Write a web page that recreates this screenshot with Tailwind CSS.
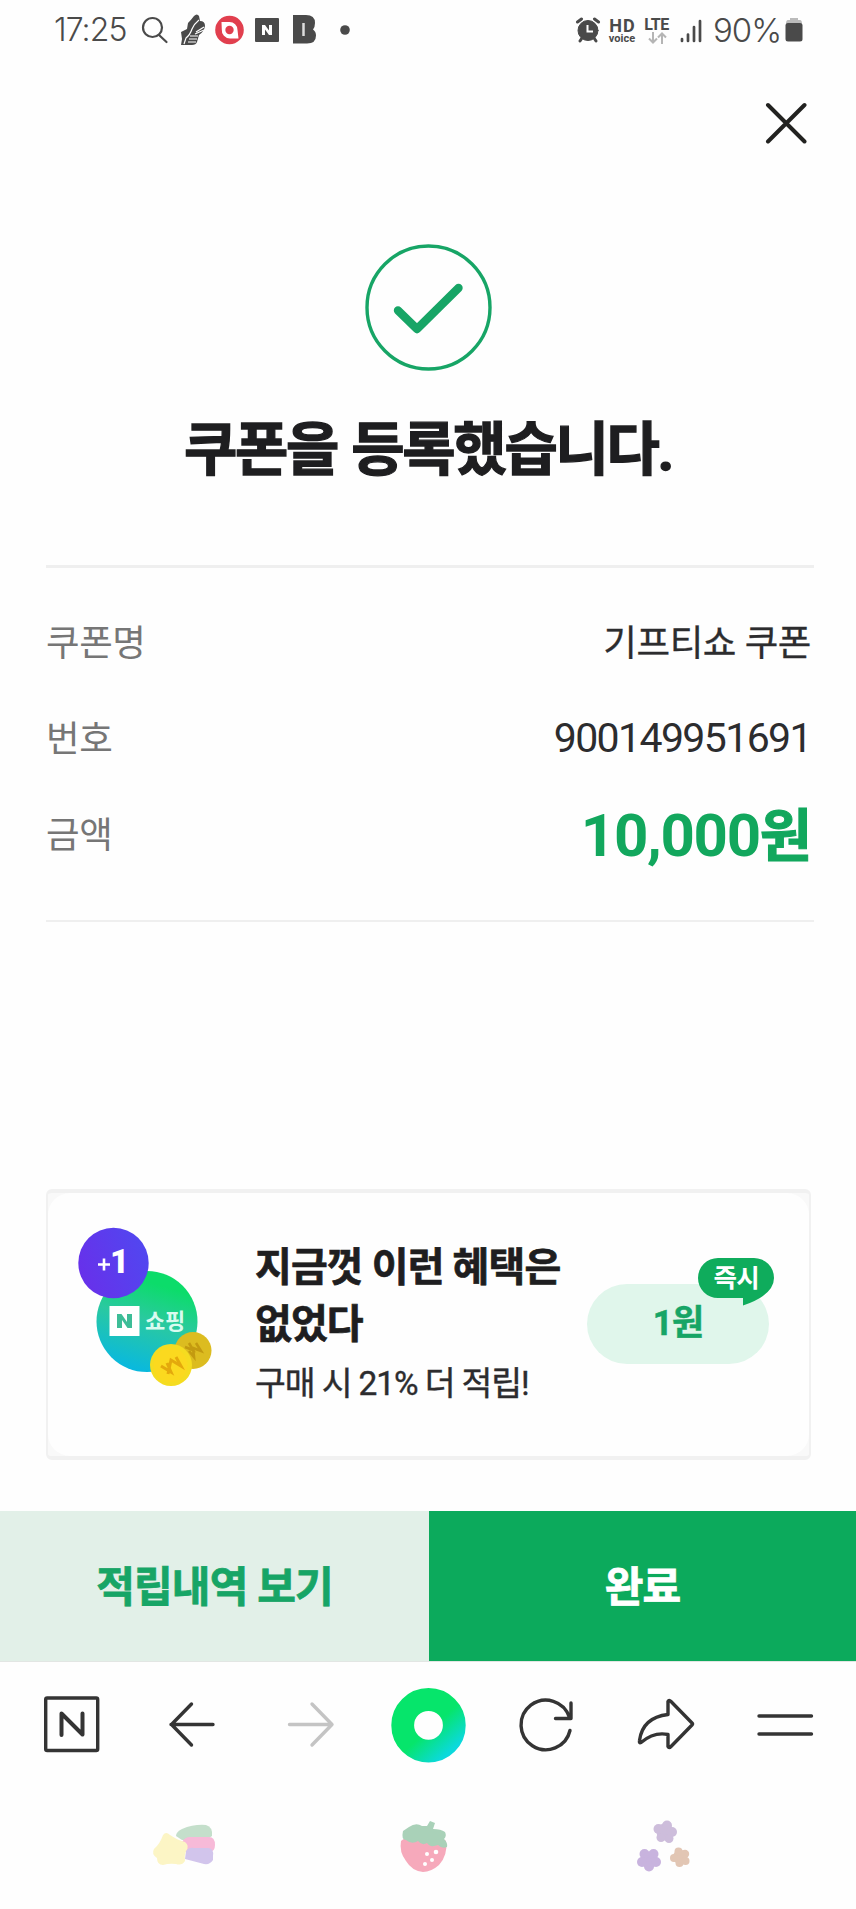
<!DOCTYPE html>
<html lang="ko">
<head>
<meta charset="utf-8">
<title>쿠폰 등록</title>
<script src="https://cdn.jsdelivr.net/npm/@tailwindcss/browser@4"></script>
</head>
<body class="bg-[#fefefe] w-[856px] h-[1909px] overflow-hidden font-['Roboto','Noto_Sans_CJK_KR',sans-serif] text-[#1e1e20] flex flex-col">

<!-- status bar -->
<header class="h-[60px] shrink-0 flex items-center pl-[54px] text-[#4a4a4a]">
  <span class="w-[87px] text-[32px] leading-none tracking-[-0.9px] font-['Inter',sans-serif] font-[350] whitespace-nowrap">17:25</span>
  <svg class="w-[240px] h-[40px]" viewBox="0 0 240 40" fill="none">
    <circle cx="11.500" cy="17.500" r="9.500" stroke="#4a4a4a" stroke-width="2.200"/>
    <path d="M18 25l7.500 7" stroke="#4a4a4a" stroke-width="2.200" stroke-linecap="round"/>
    <path d="M53 6q3-3 5 0l1 5q5 0 5 5-1 6-6 9l-2 7q-1 3-5 3h-11l1-6-1-7 6-3 1-6q3-3 6-7z" fill="#4a4a4a"/>
    <path d="M58 10q-5 4-7 9-2 6-6 9l-2 6M63 17l-8 5M63 20l-9 4M57 26h-8M56 29h-8M55 32h-8" stroke="#fff" stroke-width="1.200"/>
    <circle cx="88.500" cy="20" r="14.300" fill="#e13f4e"/>
    <path d="M80.500 12h8a8 8 0 0 1 8 8l1 8.500h-8.500a8.200 8.200 0 0 1-8.200-9z" fill="#fff"/>
    <circle cx="88.500" cy="20" r="4.200" fill="#e13f4e"/>
    <rect x="114" y="8" width="24" height="24" rx="1" fill="#4a4a4a"/>
    <path d="M121 25v-10h3l4 5.500v-5.500h3v10h-3l-4-5.500v5.500z" fill="#fff"/>
    <path d="M152 5h13q9 0 9 8 0 4-2 6.500 3 2 3 6 0 8-9 8h-14z" fill="#4a4a4a"/>
    <path d="M162.500 13v13" stroke="#ddd" stroke-width="2.500"/>
    <circle cx="204" cy="20" r="4.800" fill="#4a4a4a"/>
  </svg>
  <svg class="w-[26px] h-[26px] ml-[194px]" viewBox="0 0 26 26" fill="none" stroke="#4a4a4a" stroke-linecap="round">
    <circle cx="13" cy="13.500" r="10" fill="#4a4a4a"/><path d="M2.500 5l4-3M23.500 5l-4-3M5 24l2-3M21 24l-2-3" stroke-width="3"/>
    <path d="M12.500 8v6.500h5.500" stroke="#fff" stroke-width="2" stroke-linecap="butt"/>
  </svg>
  <div class="ml-[7px] w-[28px] flex flex-col items-center font-bold">
    <span class="text-[18px] leading-[17px] tracking-[1px] -mr-px">HD</span><span class="text-[11px] leading-[10px]">voice</span>
  </div>
  <div class="ml-[7px] w-[27px] flex flex-col items-center">
    <span class="text-[16px] font-bold leading-[15px] tracking-[-0.4px]">LTE</span>
    <svg class="w-[20px] h-[12px]" viewBox="0 0 20 12" fill="none" stroke="#b5b5b5" stroke-width="2"><path d="M6 0v10M2 6.500l4 4 4-4M15 12V2M11 5.500l4-4 4 4"/></svg>
  </div>
  <svg class="w-[24px] h-[25px] ml-[9px]" viewBox="0 0 24 25" stroke="#4a4a4a" stroke-width="2.700" stroke-linecap="round"><path d="M3 21v2M9 16.500v6.500M15 9v14M21 3v20"/></svg>
  <span class="ml-[10px] w-[69px] text-[33px] leading-none tracking-[-1px] font-['Inter',sans-serif] font-[350] whitespace-nowrap">90%</span>
  <svg class="w-[18px] h-[24px] ml-[3px]" viewBox="0 0 18 24"><path d="M5 0h8v2h2q2 0 2 4H1q0-4 2-4h2z" fill="#bbb"/><rect x=".5" y="5" width="17" height="18.500" rx="2.500" fill="#4a4a4a"/></svg>
</header>

<div class="h-[126px] shrink-0 flex justify-end pt-[42px] pr-[49px]">
  <svg class="w-[42px] h-[42px]" viewBox="0 0 42 42" stroke="#222220" stroke-width="4" stroke-linecap="round"><path d="M3 3l36.500 36.500M39.500 3L3 39.500"/></svg>
</div>

<section class="h-[379px] shrink-0 flex flex-col items-center pt-[57px]">
  <svg class="w-[130px] h-[130px]" viewBox="0 0 130 130" fill="none" stroke="#17a566" stroke-linecap="round" stroke-linejoin="round">
    <circle cx="65.500" cy="64.500" r="61.500" stroke-width="3.400"/>
    <path d="M35 67.500l19 18.500L95.500 45" stroke-width="8.400"/>
  </svg>
  <h1 class="mt-[48px] text-[58px] leading-none font-bold tracking-[-2.3px] [word-spacing:2px] whitespace-nowrap [-webkit-text-stroke:1.3px_#1e1e20]">쿠폰을 등록했습니다.</h1>
</section>

<dl class="ml-[46px] w-[768px] h-[357px] shrink-0 border-t-[3px] border-b-2 border-[#efefef] pt-[28px] pr-[3px] text-[36.5px] leading-none tracking-[-0.4px] text-[#767676]">
  <div class="h-[96px] flex items-center justify-between"><dt>쿠폰명</dt><dd class="text-[#2c2c2e] [-webkit-text-stroke:0.3px_#2c2c2e]">기프티쇼 쿠폰</dd></div>
  <div class="h-[96px] flex items-center justify-between"><dt>번호</dt><dd class="pb-[3px] text-[41px] tracking-[-1.6px] text-[#2c2c2e]">900149951691</dd></div>
  <div class="h-[96px] flex items-center justify-between"><dt>금액</dt><dd class="text-[60px] font-bold tracking-[-1.3px] text-[#12a75d]">10,000<span class="text-[57px] [-webkit-text-stroke:1px_#12a75d]">원</span></dd></div>
</dl>

<section class="mt-[267px] ml-[46px] w-[765px] h-[271px] shrink-0 rounded-[6px] border-x-2 border-y-4 border-[#f1f1f1] bg-[#f9f9f9]">
  <div class="h-full rounded-[22px] bg-[#fefefe] flex">
    <svg class="w-[160px] h-[180px] ml-[20px] mt-[23px] font-['Roboto','Noto_Sans_CJK_KR',sans-serif]" viewBox="68 1216 160 180">
      <defs>
        <linearGradient id="shop" x1=".7" y1="0" x2=".4" y2="1"><stop offset=".15" stop-color="#0cdc6a"/><stop offset=".5" stop-color="#2ac9a0"/><stop offset="1" stop-color="#08b8e0"/></linearGradient>
        <linearGradient id="plus" x1="0" y1=".7" x2="1" y2=".3"><stop offset="0" stop-color="#6830ea"/><stop offset="1" stop-color="#5147f0"/></linearGradient>
      </defs>
      <circle cx="147" cy="1321.500" r="50.500" fill="url(#shop)"/>
      <circle cx="113.500" cy="1263" r="35.200" fill="url(#plus)"/>
      <path d="M98 1264.500h12M104 1258.500v12" stroke="#fff" stroke-width="2.600"/>
      <text x="110" y="1273" font-size="33" font-weight="900" fill="#fff">1</text>
      <rect x="109.500" y="1306" width="30" height="30" fill="#fff"/>
      <path d="M117 1328v-14h4.500l5.500 8v-8h5v14h-4.500l-5.500-8v8z" fill="#3dbd97"/>
      <text x="145" y="1329" font-size="22" font-weight="700" letter-spacing="-.3" fill="#d9fbf0">쇼핑</text>
      <circle cx="193" cy="1350.500" r="18.500" fill="#dcbc20"/>
      <path d="M185 1347l8 3-4-7M189 1351l5 6-1-9 8 3-5-8" fill="none" stroke="#c39a10" stroke-width="2.600"/>
      <circle cx="171" cy="1365" r="21" fill="#f5dc20"/><circle cx="170.500" cy="1365" r="17" fill="#fbd91f"/>
      <path d="M161 1366l10 6-4-9M168 1374l3-14 10 6-5-9" fill="none" stroke="#e4a90c" stroke-width="3"/>
    </svg>
    <div class="ml-[27px] w-[332px] pt-[46px] whitespace-nowrap">
      <p class="text-[40px] leading-[57px] font-bold tracking-[-0.9px] [-webkit-text-stroke:0.7px_#1e1e20]">지금껏 이런 혜택은<br>없었다</p>
      <p class="text-[33.5px] leading-[62px] font-normal tracking-[-1.1px] text-[#2c2c2e] [-webkit-text-stroke:0.4px_#2c2c2e]">구매 시 21% 더 적립!</p>
    </div>
    <div class="relative mt-[91px] w-[182px] h-[80px] rounded-full bg-[#e0f6eb] flex items-center justify-center text-[#17a566] text-[35px] font-bold tracking-[-0.8px] [-webkit-text-stroke:0.5px_#17a566]">1원
      <svg class="absolute left-[111px] -top-[26px] w-[77px] h-[48px]" viewBox="0 0 77 48"><path d="M20 0h36a20 20 0 0 1 20 20q0 17-31 27.500V40H20a20 20 0 0 1 0-40z" fill="#0fac5c" stroke="none"/><text x="15.500" y="29" font-size="25.500" font-weight="700" letter-spacing="-.8" fill="#fff" class="[-webkit-text-stroke:0.6px_#fff]">즉시</text></svg>
    </div>
  </div>
</section>

<div class="mt-[51px] h-[151px] shrink-0 flex text-[42px] font-bold tracking-[-0.8px] pb-px bg-linear-to-b from-[#e2f0e8] to-[#e2e6e3]">
  <button class="w-[429px] bg-[#e2f0e8] text-[#17a566] pt-[3px] [-webkit-text-stroke:0.8px_#17a566]">적립내역 보기</button>
  <button class="flex-1 bg-[#0caa5c] text-white pt-[3px] [-webkit-text-stroke:0.8px_#fff]">완료</button>
</div>

<nav class="h-[126px] shrink-0 flex items-center bg-[#fefefe]">
  <svg class="w-full h-[90px]" viewBox="0 1680 856 90" fill="none" stroke="#343434" stroke-width="3.400" stroke-linecap="round" stroke-linejoin="round">
    <defs><linearGradient id="home" x1=".3" y1=".2" x2="1" y2="1"><stop offset=".4" stop-color="#06e56b"/><stop offset=".95" stop-color="#0bd9dc"/></linearGradient></defs>
    <rect x="45.700" y="1698" width="52" height="52.500" rx="1.500"/>
    <path d="M61.500 1735v-21.500l21 21V1713.500" stroke-width="4"/>
    <path d="M213 1724.500h-42M191.500 1704l-20 20.500 20 20.500"/>
    <path d="M289.500 1724.500h42M312 1704l20 20.500-20 20.500" stroke="#c4c4c4"/>
    <circle cx="428.500" cy="1725.300" r="25.800" stroke="url(#home)" stroke-width="22.800"/>
    <path d="M570 1730.500a24.800 24.800 0 1 1-.5-13M571 1703v15.500h-15.500"/>
    <path d="M668 1714.500v-13q1-2 3 0l21 21.500q1 1 0 2l-21 21.500q-2 2-3 0v-12q-14-3-27 8-2 1-1.500-2 3-23 28.500-26z"/>
    <path d="M759 1716h52.500M759 1734h52.500"/>
  </svg>
</nav>

<footer class="flex-1 bg-[#fefefe] pt-[2px]">
  <svg class="w-full h-[110px]" viewBox="0 1790 856 110">
    <path d="M176 1836q0-4 6-7 12-5 24-4 7 2 6 11l-6 4h-24z" fill="#c4dfcb"/>
    <path d="M182 1842q3-5 8-5h19q6 0 6 8 0 7-6 7h-24z" fill="#f7bad8"/>
    <path d="M186 1851q3-4 8-3h14q6 0 5 8v4q-3 5-9 4l-19-5z" fill="#d2c5ec"/>
    <path d="M163 1835q3-4 7 0l5 3q3 2 10 4 5 4 1 9-2 5-1 10-3 5-9 3-7-1-13 1-6 0-6-7-6-4-3-9 6-5 9-14z" fill="#fcf5c5"/>
    <path d="M401 1841q6-6 22-3 16-4 23 3 2 14-7 24-8 7-16 7-11-1-17-11-7-9-5-20z" fill="#f6a9bb"/>
    <path d="M403 1831l6-4q7-5 13-1l5 0 3-5 5 2-2 6q8 0 12 3 2 4-1 7 4 4 3 8-5 2-9-2-8 3-11-2-5 3-9-2-6 4-12-1-5 0-3-9z" fill="#a9d1b8"/>
    <g fill="#fff"><circle cx="427" cy="1854" r="2"/><circle cx="436" cy="1852" r="2.300"/><circle cx="432" cy="1860" r="2"/><circle cx="425" cy="1864" r="2"/></g>
    <g>
      <g transform="translate(665 1832)" fill="#cdbddb"><circle r="8.500"/><circle cx="2" cy="-6.500" r="5"/><circle cx="7" cy="0" r="5"/><circle cx="4" cy="6.500" r="4.500"/><circle cx="-4" cy="5.500" r="4.500"/><circle cx="-6.500" cy="-3" r="5"/></g>
      <g transform="translate(649 1860)" fill="#c8b3de"><circle r="8.500"/><circle cx="-4.500" cy="-6" r="5"/><circle cx="4.500" cy="-6" r="5"/><circle cx="7" cy="2" r="5"/><circle cx="0" cy="6.500" r="5"/><circle cx="-7" cy="2" r="5"/></g>
      <g transform="translate(680 1857)" fill="#e2c6b4"><circle r="7.200"/><circle cx="-1.500" cy="-5.500" r="4"/><circle cx="5" cy="-3" r="4.200"/><circle cx="5.500" cy="4" r="4"/><circle cx="-.5" cy="6" r="4"/><circle cx="-6" cy="1" r="4"/></g>
    </g>
  </svg>
</footer>
</body>
</html>
